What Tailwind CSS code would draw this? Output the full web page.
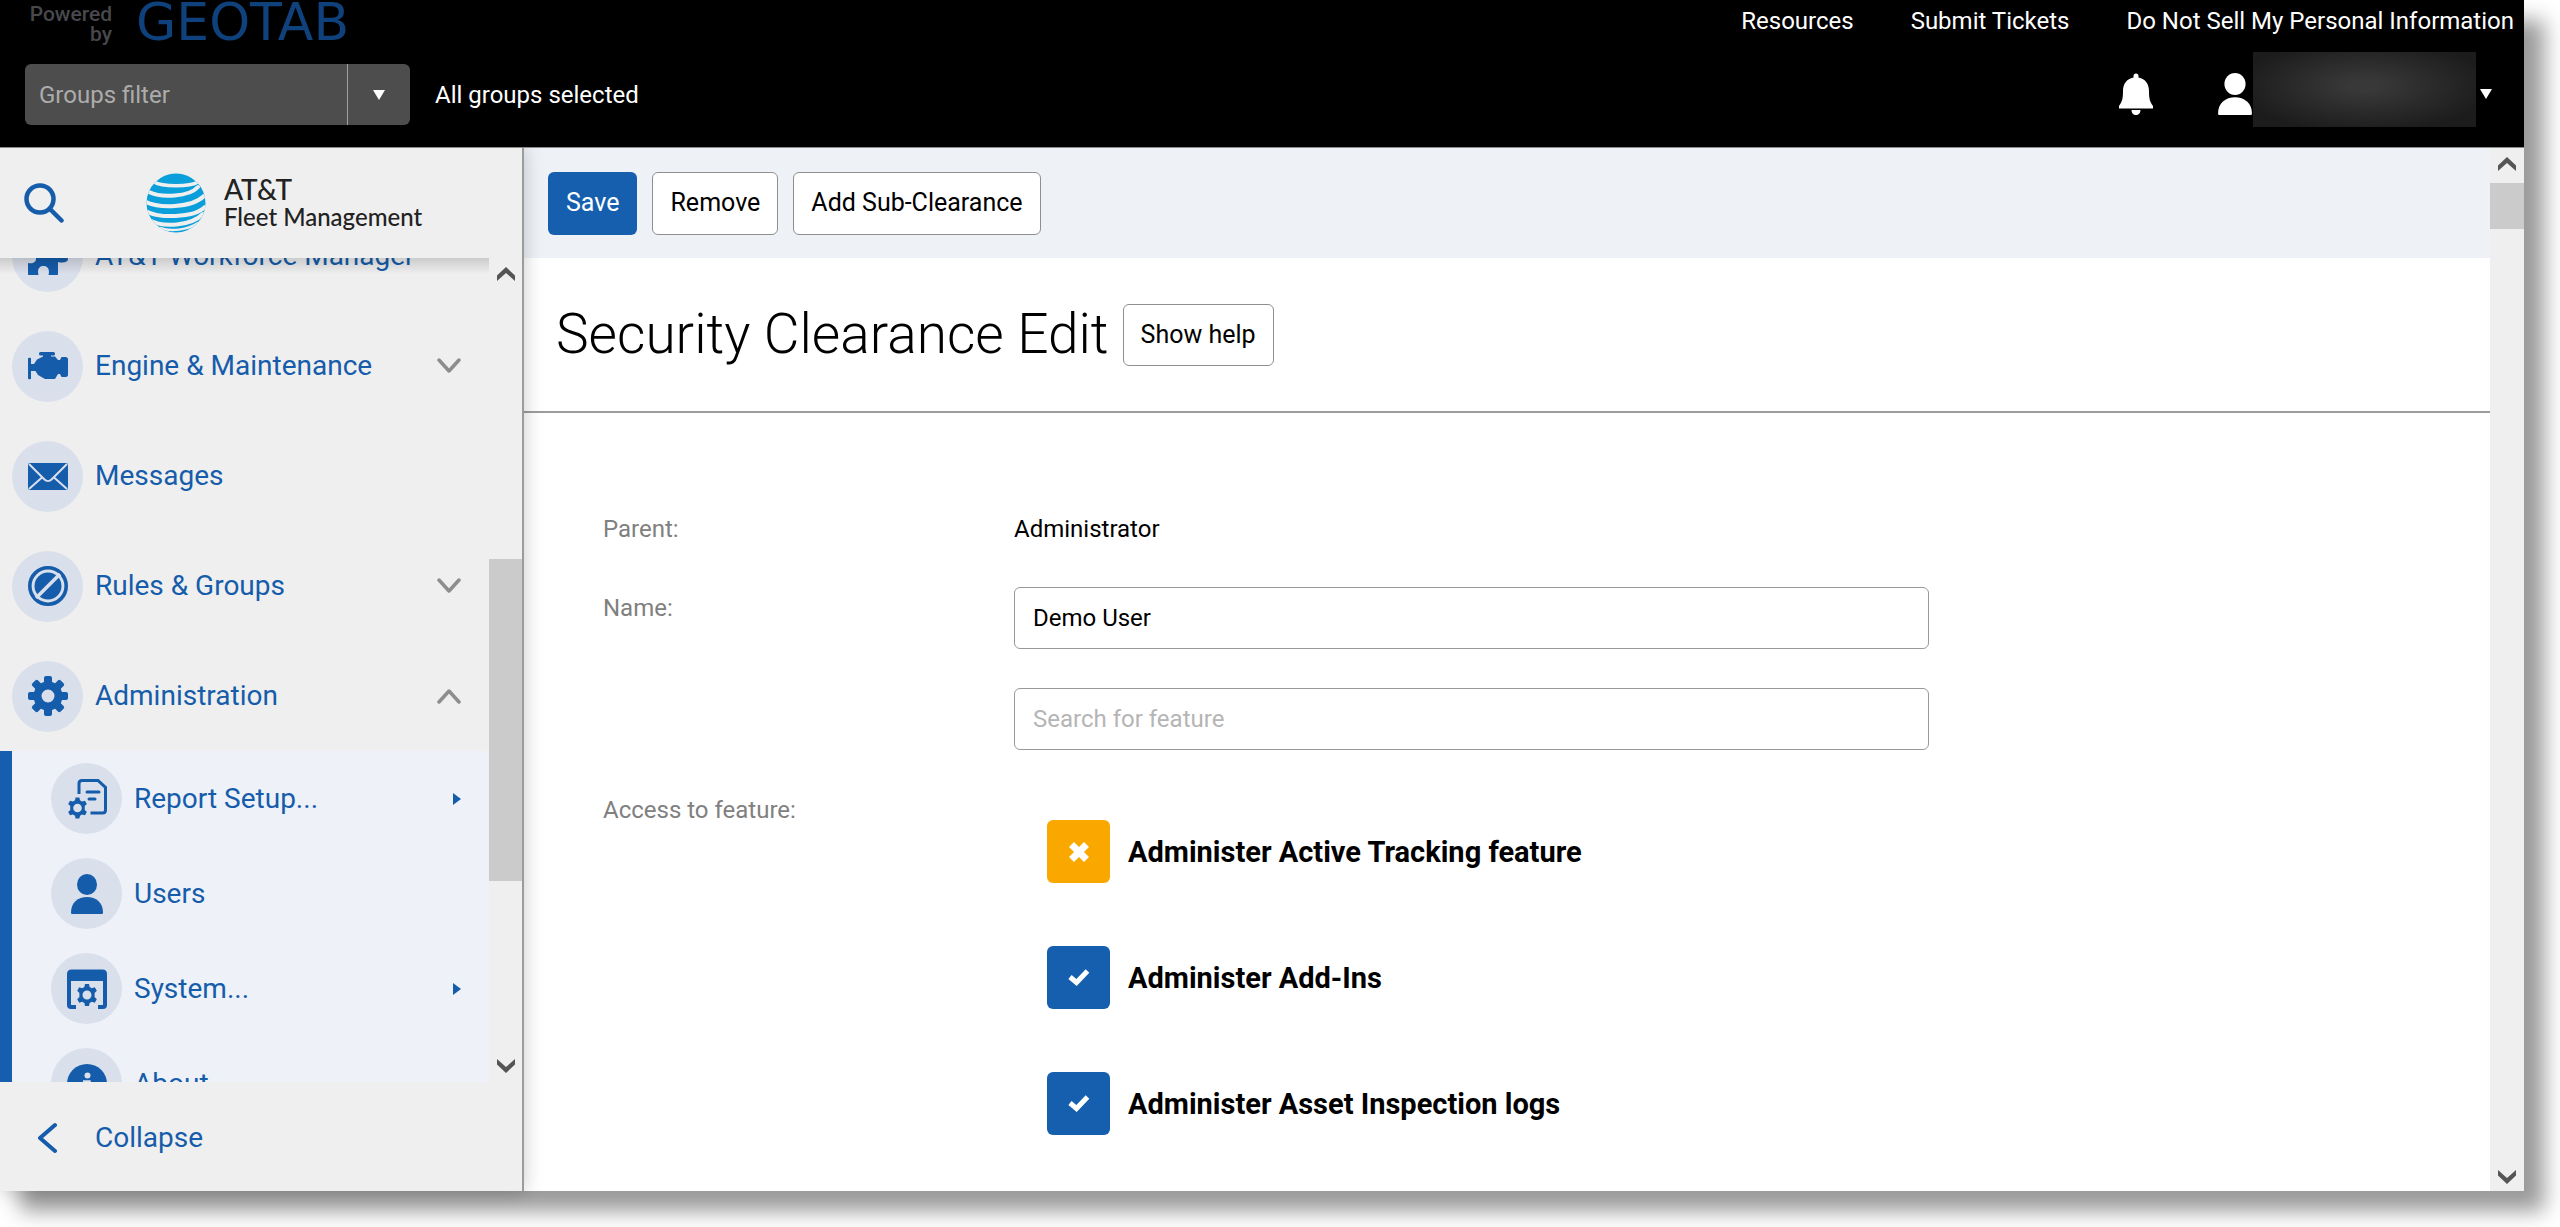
<!DOCTYPE html>
<html lang="en">
<head>
<meta charset="utf-8">
<title>Security Clearance Edit</title>
<script src="https://cdn.jsdelivr.net/npm/@tailwindcss/browser@4"></script>
</head>
<body class="h-screen overflow-hidden bg-white pr-9 pb-9 font-[Roboto,sans-serif] text-2xl text-black">
<svg class="hidden" aria-hidden="true">
  <symbol id="chevron" viewBox="0 0 24 16"><path d="M2 2l10 11L22 2" fill="none" stroke="currentColor" stroke-width="3.500" stroke-linecap="round" stroke-linejoin="round"/></symbol>
  <symbol id="scroll-arrow" viewBox="0 0 18 14"><path d="M0 8.500L9 0l9 8.500V14L9 6 0 14z" fill="currentColor"/></symbol>
  <symbol id="person" viewBox="0 0 40 40"><ellipse cx="20" cy="10.500" rx="10" ry="10.500"/><path d="M4 38.500C4 28.500 11 23 20 23s16 5.500 16 15.500c0 1-.5 1.500-1.500 1.500h-29C4.500 40 4 39.500 4 38.500z"/></symbol>
  <symbol id="cog-small" viewBox="0 0 22 22"><path fill-rule="evenodd" d="M9 0h4l.6 3 2.200 1.300 3-1 2 3.500L18.600 9v4l2.200 2.200-2 3.500-3-1-2.200 1.300L13 22H9l-.6-3-2.200-1.300-3 1-2-3.500L3.400 13V9L1.200 6.800l2-3.500 3 1L8.400 3zM11 6.500a4.500 4.500 0 100 9 4.500 4.500 0 000-9z"/></symbol>
</svg>

<div class="flex h-full flex-col shadow-[20px_20px_20px_rgba(0,0,0,0.4)]">
  <header class="relative z-20 flex h-[148px] shrink-0 justify-between border-b border-[#8a8a8a] bg-black text-white">
    <div class="pl-[25px]">
      <div class="flex h-16 items-start gap-6">
        <p class="w-[87px] pt-1 text-right text-[21px] leading-5 font-medium text-[#48484d]">Powered by</p>
        <p class="text-[52px] leading-[44px] font-[DejaVu_Sans,sans-serif] text-[#0f427c]">GEOTAB</p>
      </div>
      <div class="flex items-center gap-[25px]">
        <div class="flex h-[61px] w-[385px] overflow-hidden rounded-md bg-[#4d4d4d]">
          <input type="text" aria-label="Groups filter" placeholder="Groups filter" class="min-w-0 flex-1 px-3.5 placeholder:text-[#acacac]">
          <button type="button" aria-label="Open groups filter" class="flex w-[63px] items-center justify-center border-l border-[#a0a0a0]">
            <svg class="h-2.5 w-3" viewBox="0 0 12 10" fill="#fff"><path d="M0 0h12L6 10z"/></svg>
          </button>
        </div>
        <span>All groups selected</span>
      </div>
    </div>
    <div class="flex flex-col items-end">
      <nav class="flex h-[52px] gap-[57px] pt-[5px] pr-2.5 leading-8">
        <a href="#">Resources</a>
        <a href="#">Submit Tickets</a>
        <a href="#">Do Not Sell My Personal Information</a>
      </nav>
      <div class="flex h-[75px] items-center pr-8">
        <button type="button" aria-label="Notifications" class="mt-2 mr-[62px]">
          <svg class="h-[42px] w-[38px]" viewBox="0 0 38 42" fill="#fff"><path d="M16.500 3a2.500 2.500 0 015 0v1.500C28.500 6 32 11 32 18c0 8 1 11 4 15v2.500H2V33c3-4 4-7 4-15C6 11 9.500 6 16.500 4.500zM14.500 37h9c0 3-2 5-4.500 5s-4.500-2-4.500-5z"/></svg>
        </button>
        <button type="button" aria-label="Account" class="flex items-center">
          <svg class="mt-2 h-[42px] w-9 fill-white" viewBox="3 0 34 40" preserveAspectRatio="none"><use href="#person" width="40" height="40"/></svg>
          <span class="h-[75px] w-[223px] bg-radial-[at_50%_45%] from-[#383838] from-10% to-[#1c1c1c] to-80%"></span>
          <svg class="mt-2 ml-1 h-2.5 w-3" viewBox="0 0 12 10" fill="#fff"><path d="M0 0h12L6 10z"/></svg>
        </button>
      </div>
    </div>
  </header>

  <div class="flex min-h-0 flex-1">
    <aside class="relative z-10 flex w-[524px] shrink-0 flex-col border-r-2 border-[#9c9c9c] bg-[#efefef] text-[28px] text-[#155cab] shadow-[0_0_18px_rgba(0,0,0,0.22)]">
      <div class="flex h-[110px] shrink-0 items-center pl-6">
        <button type="button" aria-label="Search">
          <svg class="size-10" viewBox="0 0 40 40" fill="none" stroke="currentColor" stroke-width="4.500" stroke-linecap="round"><circle cx="16" cy="16" r="13.500"/><path d="M26 26l11.500 11.500"/></svg>
        </button>
        <svg class="ml-[82px] size-[60px]" viewBox="0 0 60 60">
          <defs><clipPath id="globe"><circle cx="30" cy="30" r="29.500"/></clipPath></defs>
          <circle cx="30" cy="30" r="29.500" fill="#0a9fdb"/>
          <g clip-path="url(#globe)" fill="none" stroke="#efefef" stroke-linecap="round">
            <path stroke-width="3.500" d="M8 9c8 5 36 5 44 0"/>
            <path stroke-width="4" d="M3 19c12 6 40 5 49-5"/>
            <path stroke-width="4" d="M-2 28c14 8 48 7 60-5"/>
            <path stroke-width="4" d="M-2 37c14 9 50 8 61-3"/>
            <path stroke-width="4" d="M3 47c14 8 42 6 54-6"/>
            <path stroke-width="2.500" d="M14 55c10 4 28 2 38-5"/>
          </g>
        </svg>
        <div class="ml-[18px] font-[Lato,sans-serif] text-2xl leading-7 font-medium text-[#222]">
          <p class="text-[28px] leading-7">AT&amp;T</p>
          <p class="leading-7">Fleet Management</p>
        </div>
      </div>

      <div class="relative flex min-h-0 flex-1">
        <nav class="min-w-0 flex-1 overflow-hidden">
          <ul class="-mt-[57px]">
            <li><a href="#" class="flex h-[110px] items-center gap-3 pl-3">
              <span class="flex size-[71px] items-center justify-center rounded-full bg-[#d9dfeb]"><svg class="size-10 fill-current" viewBox="0 0 40 40"><path d="M1 10h9.500C9 4 11 0 15 0s6 4 4.500 10H29c.8 0 1 .3 1 1v9c6-2 10 0 10 3s-4 4.500-10 3v12c0 .8-.3 1-1 1h-8.500c1.500-6-1-9-5-9s-6.500 3-5 9H1c-.8 0-1-.3-1-1V27c5 1 8-1 8-4s-3-4.500-8-3v-9c0-.7.200-1 1-1z"/></svg></span>
              AT&amp;T Workforce Manager</a></li>
            <li><a href="#" class="flex h-[110px] items-center gap-3 pl-3">
              <span class="flex size-[71px] items-center justify-center rounded-full bg-[#d9dfeb]"><svg class="size-10 fill-current" viewBox="0 0 40 40"><rect x="11" y="6" width="16" height="3.500" rx="1.500"/><path d="M15 8h8v2.500h4l3 3.500h2l1.500-3h4c1.500 0 2.500 1 2.500 2v16c0 1-1 2-2.500 2h-4L32 28h-2l-3 5H17l-7-4-2.500-4H3v7.500c0 1-3 1-3 0v-20c0-1 3-1 3 0V18h3l3-4.500 6-3z"/></svg></span>
              <span class="flex-1">Engine &amp; Maintenance</span><svg class="mr-7 h-4 w-6 text-[#8d8d8d]"><use href="#chevron"/></svg></a></li>
            <li><a href="#" class="flex h-[110px] items-center gap-3 pl-3">
              <span class="flex size-[71px] items-center justify-center rounded-full bg-[#d9dfeb]"><svg class="size-10" viewBox="0 0 40 40"><rect y="7" width="40" height="27" rx="2" fill="currentColor"/><path d="M1 8l15.500 15.500c2 2 5 2 7 0L39 8M1 33l13.500-12M39 33L25.500 21" fill="none" stroke="#d9dfeb" stroke-width="2"/></svg></span>
              Messages</a></li>
            <li><a href="#" class="flex h-[110px] items-center gap-3 pl-3">
              <span class="flex size-[71px] items-center justify-center rounded-full bg-[#d9dfeb]"><svg class="size-10" viewBox="0 0 40 40"><circle cx="20" cy="20" r="18.200" fill="none" stroke="currentColor" stroke-width="3.600"/><circle cx="20" cy="20" r="13.500" fill="currentColor"/><path d="M8 32L32 8" stroke="#d9dfeb" stroke-width="3.500"/></svg></span>
              <span class="flex-1">Rules &amp; Groups</span><svg class="mr-7 h-4 w-6 text-[#8d8d8d]"><use href="#chevron"/></svg></a></li>
            <li><a href="#" class="flex h-[110px] items-center gap-3 pl-3">
              <span class="flex size-[71px] items-center justify-center rounded-full bg-[#d9dfeb]"><svg class="size-10" viewBox="-20 -20 40 40"><g fill="currentColor"><rect x="-4" y="-20" width="8" height="40" rx="2"/><rect x="-4" y="-20" width="8" height="40" rx="2" transform="rotate(45)"/><rect x="-4" y="-20" width="8" height="40" rx="2" transform="rotate(90)"/><rect x="-4" y="-20" width="8" height="40" rx="2" transform="rotate(135)"/><circle r="14.500"/></g><circle r="6.500" fill="#d9dfeb"/></svg></span>
              <span class="flex-1">Administration</span><svg class="mr-7 h-4 w-6 rotate-180 text-[#8d8d8d]"><use href="#chevron"/></svg></a>
              <ul class="border-l-12 border-[#155fae] bg-[#eef2f8]">
                <li><a href="#" class="flex h-[95px] items-center gap-3 pl-[39px]">
                  <span class="flex size-[71px] items-center justify-center rounded-full bg-[#d9dfeb]"><svg class="size-10 fill-current" viewBox="0 0 40 40"><path d="M12 15V4.500C12 2.500 13 1.500 15 1.500h16l7.500 7V31c0 2-1 3-3 3H23.500" fill="none" stroke="currentColor" stroke-width="3"/><path d="M20 13h12M22 20h6" stroke="currentColor" stroke-width="3" stroke-linecap="round"/><use href="#cog-small" x="0" y="18" width="21" height="22"/></svg></span>
                  <span class="flex-1">Report Setup...</span><svg class="mr-7 h-3 w-2 fill-current" viewBox="0 0 8 12"><path d="M0 0l8 6-8 6z"/></svg></a></li>
                <li><a href="#" class="flex h-[95px] items-center gap-3 pl-[39px]">
                  <span class="flex size-[71px] items-center justify-center rounded-full bg-[#d9dfeb]"><svg class="size-10 fill-current"><use href="#person"/></svg></span>
                  Users</a></li>
                <li><a href="#" class="flex h-[95px] items-center gap-3 pl-[39px]">
                  <span class="flex size-[71px] items-center justify-center rounded-full bg-[#d9dfeb]"><svg class="size-10 fill-current" viewBox="0 0 40 40"><path d="M2 2h36v10H2z"/><path d="M9 38H4c-1.500 0-2-.5-2-2V5c0-1.500 1-2.500 2.500-2.500h31C37 2.500 38 3.500 38 5v31c0 1.500-.5 2-2 2h-5" fill="none" stroke="currentColor" stroke-width="4"/><use href="#cog-small" x="9" y="15" width="22" height="22"/></svg></span>
                  <span class="flex-1">System...</span><svg class="mr-7 h-3 w-2 fill-current" viewBox="0 0 8 12"><path d="M0 0l8 6-8 6z"/></svg></a></li>
                <li><a href="#" class="flex h-[95px] items-center gap-3 pl-[39px]">
                  <span class="flex size-[71px] items-center justify-center rounded-full bg-[#d9dfeb]"><svg class="size-10" viewBox="0 0 40 40"><circle cx="20" cy="20" r="20" fill="currentColor"/><circle cx="20.500" cy="11.500" r="3" fill="#d9dfeb"/><path d="M16 18h6v13M16 31h9" fill="none" stroke="#d9dfeb" stroke-width="3.500"/></svg></span>
                  About...</a></li>
              </ul>
            </li>
          </ul>
        </nav>
        <div class="flex w-[33px] flex-col items-center py-[9px] text-[#555]">
          <svg class="h-3.5 w-[18px]"><use href="#scroll-arrow"/></svg>
          <div class="mt-[278px] h-[322px] w-full bg-[#cbcbcb]"></div>
          <svg class="mt-auto h-3.5 w-[18px] rotate-180"><use href="#scroll-arrow"/></svg>
        </div>
        <div class="pointer-events-none absolute top-0 right-[33px] left-0 h-4 bg-linear-to-b from-black/15 to-transparent"></div>
      </div>

      <button type="button" class="flex h-[109px] shrink-0 items-center gap-[38px] pt-0.5 pl-[37px]">
        <svg class="h-8 w-5" viewBox="0 0 20 32" fill="none" stroke="currentColor" stroke-width="4" stroke-linecap="round" stroke-linejoin="round"><path d="M18 3L3 16l15 13"/></svg>
        Collapse
      </button>
    </aside>

    <main class="min-w-0 flex-1 overflow-hidden bg-white">
      <div class="flex h-[110px] items-center gap-[15px] bg-[#eef2f7] pl-6 text-[25px]">
        <button type="button" class="h-[63px] rounded-md bg-[#155fae] px-[18px] text-white">Save</button>
        <button type="button" class="h-[63px] rounded-md border border-[#8f8f8f] bg-white px-[17px]">Remove</button>
        <button type="button" class="h-[63px] rounded-md border border-[#8f8f8f] bg-white px-[17px]">Add Sub-Clearance</button>
      </div>
      <div class="flex h-[155px] items-center gap-3.5 border-b-2 border-[#9c9c9c] pl-8">
        <h1 class="text-[55px] font-light">Security Clearance Edit</h1>
        <button type="button" class="h-[62px] rounded-md border border-[#8f8f8f] px-[17px] text-[25px]">Show help</button>
      </div>
      <form class="grid grid-cols-[411px_minmax(0,915px)] pt-[100px] pl-[79px] leading-8 text-[#808080]">
        <span>Parent:</span>
        <span class="text-black">Administrator</span>
        <label for="name" class="pt-[47px]">Name:</label>
        <input id="name" type="text" value="Demo User" class="mt-[42px] h-[62px] rounded-md border border-[#999] px-[18px] text-black">
        <input type="search" aria-label="Search for feature" placeholder="Search for feature" class="col-start-2 mt-[39px] h-[62px] rounded-md border border-[#999] px-[18px] placeholder:text-[#b5b5b5]">
        <span class="pt-11">Access to feature:</span>
        <div class="flex flex-col gap-[63px] pt-[70px] pl-[33px] text-[29px] font-bold text-black">
          <label class="flex items-center gap-[18px]">
            <span class="grid size-[63px] place-items-center">
              <input type="checkbox" class="size-full appearance-none rounded-md bg-[#faa700] [grid-area:1/1]">
              <svg class="pointer-events-none z-10 size-6 [grid-area:1/1]" viewBox="0 0 24 24"><path d="M4.500 4.500l15 15M19.500 4.500l-15 15" stroke="#fff" stroke-width="7"/></svg>
            </span>
            Administer Active Tracking feature
          </label>
          <label class="flex items-center gap-[18px]">
            <span class="grid size-[63px] place-items-center">
              <input type="checkbox" checked class="size-full appearance-none rounded-md bg-[#155fae] [grid-area:1/1]">
              <svg class="pointer-events-none z-10 size-6 [grid-area:1/1]" viewBox="0 0 24 24"><path d="M3 11l6.500 5.500L20.500 5" fill="none" stroke="#fff" stroke-width="5"/></svg>
            </span>
            Administer Add-Ins
          </label>
          <label class="flex items-center gap-[18px]">
            <span class="grid size-[63px] place-items-center">
              <input type="checkbox" checked class="size-full appearance-none rounded-md bg-[#155fae] [grid-area:1/1]">
              <svg class="pointer-events-none z-10 size-6 [grid-area:1/1]" viewBox="0 0 24 24"><path d="M3 11l6.500 5.500L20.500 5" fill="none" stroke="#fff" stroke-width="5"/></svg>
            </span>
            Administer Asset Inspection logs
          </label>
        </div>
      </form>
    </main>
    <div class="flex w-[34px] shrink-0 flex-col items-center bg-[#efefef] pt-[9px] pb-[7px] text-[#555]">
      <svg class="h-3.5 w-[18px]"><use href="#scroll-arrow"/></svg>
      <div class="mt-3 h-[46px] w-full bg-[#cbcbcb]"></div>
      <svg class="mt-auto h-3.5 w-[18px] rotate-180"><use href="#scroll-arrow"/></svg>
    </div>
  </div>
</div>
</body>
</html>
